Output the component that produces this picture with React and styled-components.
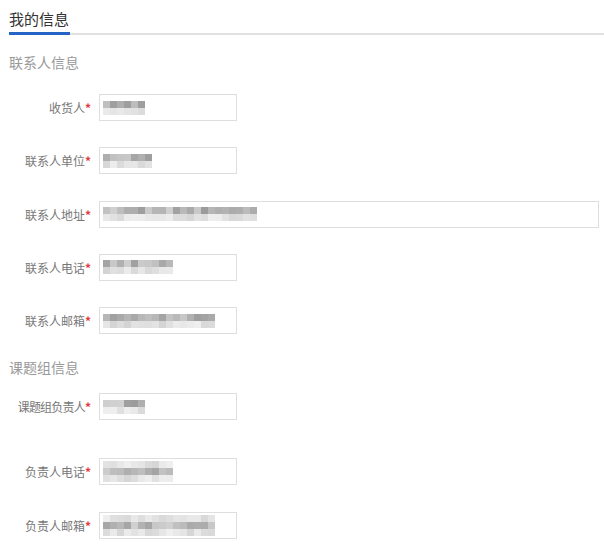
import React from "react";
import styled, { createGlobalStyle } from "styled-components";

const GlobalStyle = createGlobalStyle`
  body {
    margin: 0;
    background: #fff;
    font-family: "Noto Sans CJK SC", "Noto Sans", sans-serif;
  }
`;

const Page = styled.div`
  padding-left: 9px;
  width: 595px;
`;

const Header = styled.div`
  display: flex;
  padding-top: 7px;
  border-bottom: 2px solid #e1e1e1;
`;

const Title = styled.div`
  font-size: 15px;
  line-height: 24px;
  color: #333;
  padding-right: 1px;
  padding-bottom: 1px;
  border-bottom: 3px solid #2563c4;
  margin-bottom: -2px;
`;

const SectionTitle = styled.div`
  font-size: 14px;
  line-height: 20px;
  color: #999;
  margin-top: ${({ $top }) => $top}px;
`;

const Form = styled.div`
  display: flex;
  flex-direction: column;
  gap: 26.25px;
  margin-top: ${({ $top }) => $top}px;
`;

const Row = styled.div`
  display: flex;
  align-items: center;
  gap: 8px;
  margin-top: ${({ $extra }) => $extra || 0}px;
`;

const Label = styled.div`
  width: 82px;
  text-align: right;
  font-size: 12px;
  color: #777;
  white-space: nowrap;
  letter-spacing: ${({ $tight }) => ($tight ? "-0.8px" : "0")};
`;

const Star = styled.span`
  color: #e4393c;
  font-weight: bold;
  letter-spacing: 0;
`;

const Field = styled.div`
  box-sizing: border-box;
  width: ${({ $wide }) => ($wide ? "500px" : "138px")};
  height: 27px;
  border: 1px solid #dedede;
  display: flex;
  align-items: center;
  padding-left: 3px;
`;

const Mosaic = styled.div`
  display: grid;
  grid-auto-flow: column;
  grid-template-rows: repeat(${({ $rows }) => $rows}, 7px);
  grid-auto-columns: 7px;
`;

const Cell = styled.div`
  background: #666;
`;

function rand(seed) {
  let s = seed;
  return () => {
    s = (s * 9301 + 49297) % 233280;
    return s / 233280;
  };
}

const Redacted = ({ width, seed, rows = 2 }) => {
  const r = rand(seed);
  const cols = Math.round(width / 7);
  const cells = [];
  for (let c = 0; c < cols; c++) {
    for (let i = 0; i < rows; i++) {
      const mid = rows === 3 ? i === 1 : i === 0;
      const a = mid ? 0.3 + r() * 0.35 : 0.1 + r() * 0.18;
      cells.push(<Cell key={c + "-" + i} style={{ opacity: a }} />);
    }
  }
  return <Mosaic $rows={rows}>{cells}</Mosaic>;
};

const contact = [
  { label: "收货人", w: 40, seed: 3 },
  { label: "联系人单位", w: 49, seed: 11 },
  { label: "联系人地址", w: 154, seed: 27, wide: true },
  { label: "联系人电话", w: 70, seed: 41 },
  { label: "联系人邮箱", w: 110, seed: 57 },
];

const group = [
  { label: "课题组负责人", w: 39, seed: 71, tight: true },
  { label: "负责人电话", w: 70, seed: 83, rows: 3, extra: 12 },
  { label: "负责人邮箱", w: 110, seed: 97, rows: 3 },
];

const FormRow = ({ item }) => (
  <Row $extra={item.extra}>
    <Label $tight={item.tight}>
      {item.label}
      <Star>*</Star>
    </Label>
    <Field $wide={item.wide}>
      <Redacted width={item.w} seed={item.seed} rows={item.rows} />
    </Field>
  </Row>
);

export default function App() {
  return (
    <Page>
      <GlobalStyle />
      <Header>
        <Title>我的信息</Title>
      </Header>
      <SectionTitle $top={17}>联系人信息</SectionTitle>
      <Form $top={22}>
        {contact.map((item) => (
          <FormRow key={item.label} item={item} />
        ))}
      </Form>
      <SectionTitle $top={23}>课题组信息</SectionTitle>
      <Form $top={16}>
        {group.map((item) => (
          <FormRow key={item.label} item={item} />
        ))}
      </Form>
    </Page>
  );
}
